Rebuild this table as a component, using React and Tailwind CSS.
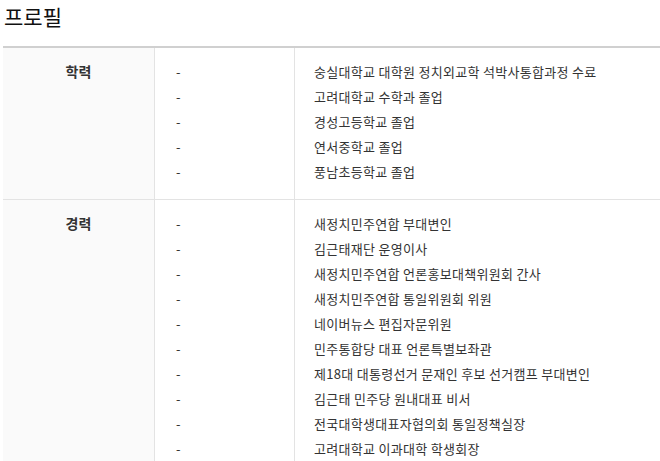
import React from "react";

const sections = [
  {
    title: "학력",
    items: [
      "숭실대학교 대학원 정치외교학 석박사통합과정 수료",
      "고려대학교 수학과 졸업",
      "경성고등학교 졸업",
      "연서중학교 졸업",
      "풍남초등학교 졸업",
    ],
  },
  {
    title: "경력",
    items: [
      "새정치민주연합 부대변인",
      "김근태재단 운영이사",
      "새정치민주연합 언론홍보대책위원회 간사",
      "새정치민주연합 통일위원회 위원",
      "네이버뉴스 편집자문위원",
      "민주통합당 대표 언론특별보좌관",
      "제18대 대통령선거 문재인 후보 선거캠프 부대변인",
      "김근태 민주당 원내대표 비서",
      "전국대학생대표자협의회 통일정책실장",
      "고려대학교 이과대학 학생회장",
    ],
  },
];

export default function App() {
  return (
    <div className="w-[660px] h-[461px] overflow-hidden bg-white text-[#333] font-['Noto_Sans_CJK_KR','Noto_Sans',sans-serif]">
      <h1 className="pl-[4px] pt-[1px] h-[46px] text-[21px] leading-[30px] text-[#111]">프로필</h1>
      <div className="ml-[3px] border-t-2 border-[#d0d0d0]">
        {sections.map((s, i) => (
          <div key={i} className="flex border-b border-[#e3e3e3]">
            <div className="w-[152px] shrink-0 bg-[#fafafa] border-r border-[#e3e3e3] pt-[11px] text-center text-[14px] font-bold leading-[25px] text-[#333]">
              {s.title}
            </div>
            <div className="w-[140px] shrink-0 border-r border-[#e3e3e3] pt-[11px] pb-[15px] pl-[21px] text-[13px] leading-[25px]">
              {s.items.map((_, j) => (
                <div key={j}>-</div>
              ))}
            </div>
            <div className="flex-1 pt-[11px] pb-[15px] pl-[19px] text-[13px] leading-[25px] whitespace-nowrap">
              {s.items.map((t, j) => (
                <div key={j} className="tracking-[0.3px]">{t}</div>
              ))}
            </div>
          </div>
        ))}
      </div>
    </div>
  );
}
